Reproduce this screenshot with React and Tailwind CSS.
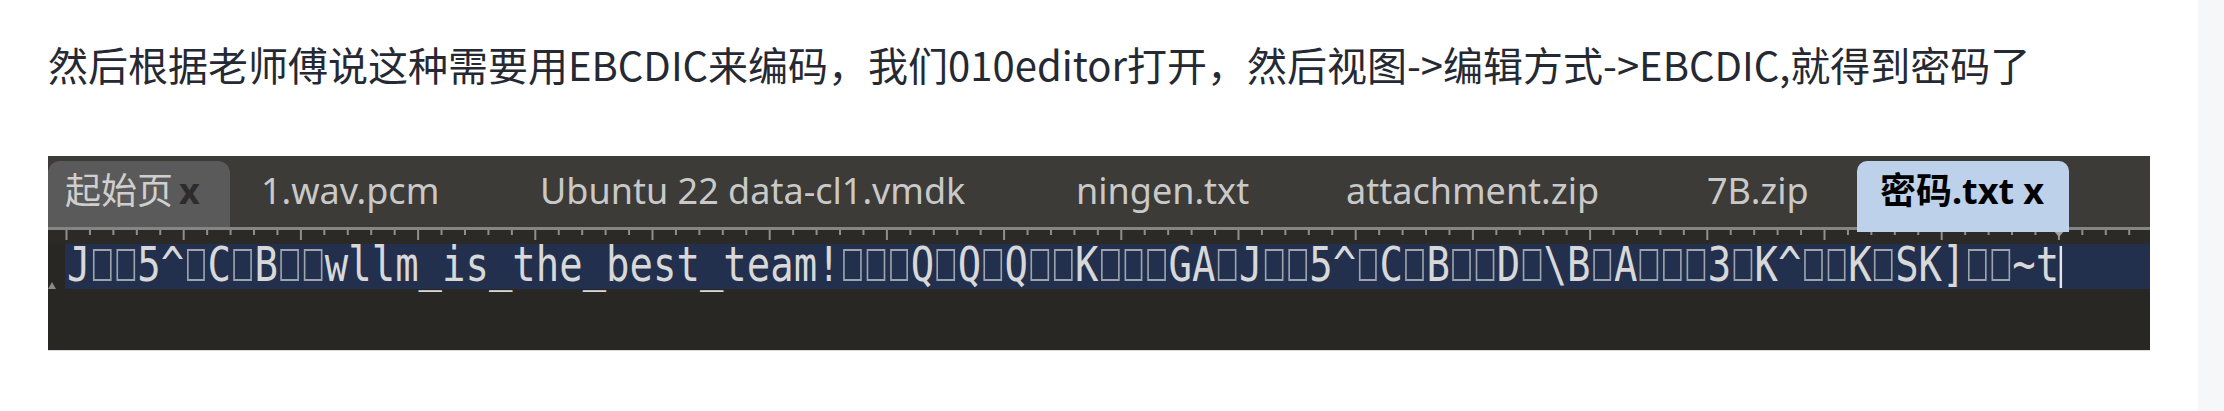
import React from 'react';

const LINE = 'J□□5^□C□B□□wllm_is_the_best_team!□□□Q□Q□Q□□K□□□GA□J□□5^□C□B□□D□\\B□A□□□3□K^□□K□SK]□□~t';

const TABS = [
  { label: '起始页', w: 'w-[182px]', kind: 'home' },
  { label: '1.wav.pcm', w: 'w-[279px]' },
  { label: 'Ubuntu 22 data-cl1.vmdk', w: 'w-[536px]' },
  { label: 'ningen.txt', w: 'w-[270px]' },
  { label: 'attachment.zip', w: 'w-[361px]' },
  { label: '7B.zip', w: 'w-[181px]' },
  { label: '密码.txt', w: 'w-[212px]', kind: 'active' },
];

const CELL = 23.44;

function Tab({ tab }) {
  if (tab.kind === 'home') {
    return (
      <div className={`${tab.w} mt-[5px] flex h-[66px] shrink-0 items-center rounded-t-[12px] bg-[#5a5a5a] pb-[6px] pl-[17px] text-[#cfcfcf]`}>
        <span>{tab.label}</span>
        <span className="ml-[6px] font-bold text-[#2c2c2c]">x</span>
      </div>
    );
  }
  if (tab.kind === 'active') {
    return (
      <div className={`${tab.w} relative z-10 mt-[5px] flex h-[71px] shrink-0 items-center rounded-t-[10px] bg-[#bdd1ea] pb-[11px] pl-[23px] font-bold text-black`}>
        <span>{tab.label}</span>
        <span className="ml-[9px]">x</span>
      </div>
    );
  }
  return (
    <div className={`${tab.w} mt-[5px] flex h-[66px] shrink-0 items-center pb-[6px] pl-[31px] text-[#c9c9c9]`}>
      <span className="whitespace-nowrap">{tab.label}</span>
    </div>
  );
}

function Ruler() {
  const ticks = Array.from({ length: 89 }, (_, k) => k);
  return (
    <div className="border-t-[3px] border-[#858585] bg-[#2b2a27]">
      <svg width="2102" height="14" className="block">
        {ticks.map((k) => (
          <rect key={k} x={17.5 + CELL * k} y={0} width={2} height={k % 5 === 0 ? 10 : 5} fill="#8f8f8f" />
        ))}
        <path d="M2005 0 L2017 0 L2011 7 Z" fill="#a0a0a0" />
      </svg>
    </div>
  );
}

function CodeLine() {
  return (
    <div className="flex h-[45px] min-w-0">
      <div className="flex w-[17px] shrink-0 items-end">
        <svg width="8" height="7" className="block">
          <path d="M0 7 L4 0 L8 7 Z" fill="#8a8a8a" />
        </svg>
      </div>
      <div className="min-w-0 flex-1 bg-[#22304e] pl-[2px]">
        <span className="inline-block origin-left scale-x-[0.811] whitespace-nowrap font-['DejaVu_Sans_Mono',monospace] text-[48px] leading-[41px] text-[#d8d8d8]">
          {LINE.split('').map((ch, i) =>
            ch === '□' ? (
              <span key={i} className="mx-[3px] inline-block h-[32px] w-[22.9px] border-2 border-[#9ea4ae]" />
            ) : (
              <React.Fragment key={i}>{ch}</React.Fragment>
            )
          )}
          <span className="inline-block h-[42px] w-[3px] bg-[#e6e6e6] align-[-7px]" />
        </span>
      </div>
    </div>
  );
}

export default function App() {
  return (
    <div className="flex h-[411px] overflow-hidden bg-white">
      <div className="min-w-0 flex-1 px-[48px]">
        <p className="pt-[32px] font-['Noto_Sans_CJK_SC',sans-serif] text-[40px] leading-[64px] whitespace-nowrap text-[#252933]">
          然后根据老师傅说这种需要用EBCDIC来编码，我们010editor打开，然后视图-&gt;编辑方式-&gt;EBCDIC,就得到密码了
        </p>

        <div className="mt-[60px] w-[2102px] border-b border-[#dcdcdc] bg-[#282723]">
          <div className="flex h-[71px] bg-[#3c3b37] font-['Noto_Sans','Noto_Sans_CJK_SC',sans-serif] text-[36px]">
            {TABS.map((t) => (
              <Tab key={t.label} tab={t} />
            ))}
          </div>
          <Ruler />
          <CodeLine />
          <div className="h-[61px]" />
        </div>
      </div>
      <div className="w-[26px] shrink-0 bg-[#f6f7f8]" />
    </div>
  );
}
